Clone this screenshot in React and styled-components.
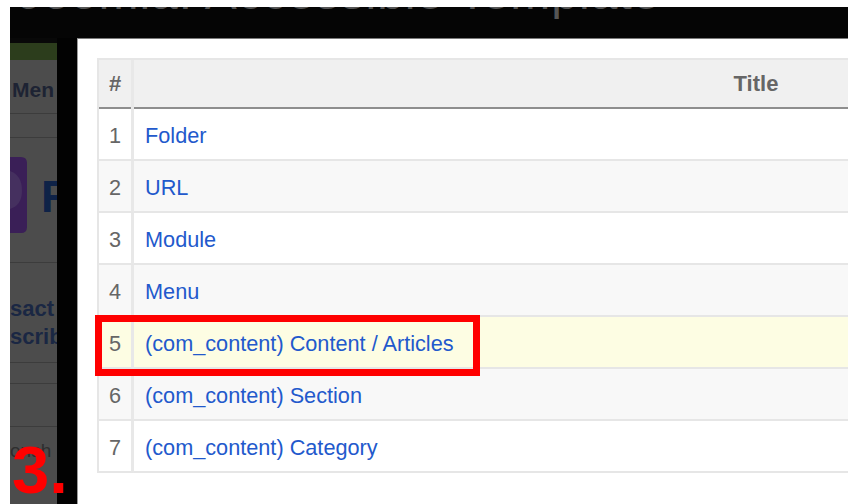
import React from "react";
import styled, { createGlobalStyle } from "styled-components";

const GlobalStyle = createGlobalStyle`
  html, body {
    margin: 0;
    padding: 0;
    background: #ffffff;
  }
  body {
    width: 848px;
    height: 504px;
    overflow: hidden;
    font-family: "Liberation Sans", Arial, sans-serif;
  }
`;

const Page = styled.div`
  position: relative;
  width: 848px;
  height: 504px;
  box-sizing: border-box;
  padding: 7px 0 0 10px;
  background: #ffffff;
  overflow: hidden;
`;

const Screen = styled.div`
  display: flex;
  flex-direction: column;
  height: 100%;
  background: #050505;
`;

/* header strip of the page behind the overlay; only the feet of its title show */
const TopBand = styled.div`
  position: relative;
  flex: none;
  height: 31px;
  overflow: hidden;
  clip-path: inset(0);
  padding-left: 8px;
`;

const BandTitle = styled.div`
  transform: translateY(-38px);
  font-size: 48px;
  line-height: 48px;
  color: #555555;
  white-space: nowrap;
  letter-spacing: 1px;
`;

const Body = styled.div`
  flex: 1;
  display: flex;
  min-height: 0;
`;

/* dimmed page sidebar behind the overlay */
const SidePanel = styled.div`
  flex: none;
  width: 47px;
  display: flex;
  flex-direction: column;
  background: #4c4c4c;
  overflow: hidden;
`;

const PanelCap = styled.div`
  flex: none;
  height: 5px;
  background: #080808;
`;

const GreenBar = styled.div`
  flex: none;
  height: 17px;
  background: #2c3d1c;
`;

const PanelRow = styled.div`
  flex: none;
  box-sizing: border-box;
  height: ${(p) => p.$h}px;
  padding: ${(p) => p.$pad || "0"};
  border-bottom: ${(p) => (p.$open ? "none" : "1px solid #3c3c3c")};
  white-space: nowrap;
  display: ${(p) => (p.$flex ? "flex" : "block")};
  align-items: flex-start;
`;

const PanelHeading = styled.div`
  font-size: 21px;
  line-height: 20px;
  font-weight: bold;
  color: #1d2333;
`;

const PanelText = styled.div`
  font-size: 22px;
  line-height: 28px;
  font-weight: bold;
  color: #1a2743;
`;

const PanelNote = styled.div`
  font-size: 19px;
  line-height: 20px;
  color: #2e2e2e;
`;

const LogoLetter = styled.div`
  margin: 36px 0 0 14px;
  font-size: 45px;
  line-height: 45px;
  font-weight: bold;
  color: #0e2247;
`;

const Gutter = styled.div`
  flex: none;
  width: 20px;
  background: #020202;
`;

const Modal = styled.div`
  flex: 1;
  position: relative;
  background: #ffffff;
  border-top: 1px solid #7a7a7a;
  border-left: 1px solid #9a9a9a;
  padding: 19px 0 0 19px;
  overflow: hidden;
`;

const Table = styled.table`
  width: 1281px;
  border-collapse: separate;
  border-spacing: 0;
  border: 2px solid #e6e6e6;
  border-right: none;
  border-bottom: none;
  font-family: "Liberation Sans", Arial, sans-serif;
`;

const HeadCell = styled.th`
  height: 47px;
  padding: 0 0 2px;
  background: #f0f0f0;
  color: #666666;
  font-size: 22px;
  font-weight: bold;
  text-align: center;
  box-shadow: inset 0 -2px 0 #8e8e8e;
  ${(p) => p.$narrow && "width: 32px; border-right: 3px solid #e8e8e8;"}
`;

const rowTones = {
  plain: "#ffffff",
  alt: "#f8f8f8",
  hover: "#fdfde3",
};

const Row = styled.tr`
  background: ${(p) => rowTones[p.$tone]};
`;

const NumCell = styled.td`
  height: 46px;
  padding: 4px 0 0;
  text-align: center;
  font-size: 21.7px;
  color: #666666;
  border-bottom: 2px solid #e6e6e6;
  border-right: 3px solid #e8e8e8;
`;

const TitleCell = styled.td`
  height: 46px;
  padding: 4px 0 0 11px;
  font-size: 21.7px;
  border-bottom: 2px solid #e6e6e6;
`;

const TitleLink = styled.a`
  color: #2259cc;
  text-decoration: none;
`;

/* red annotation frame drawn over the table */
const Highlight = styled.div`
  position: absolute;
  left: 17px;
  top: 276px;
  width: 385px;
  height: 61px;
  box-sizing: border-box;
  border: 7px solid #ff0000;
  pointer-events: none;
`;

const StepMark = styled.div`
  position: absolute;
  left: 12px;
  top: 436px;
  font-size: 67px;
  line-height: 67px;
  font-weight: bold;
  color: #ff0000;
`;

const items = [
  "Folder",
  "URL",
  "Module",
  "Menu",
  "(com_content) Content / Articles",
  "(com_content) Section",
  "(com_content) Category",
];

function Logo() {
  return (
    <svg width="17" height="76" viewBox="0 0 17 76" style={{ marginTop: 19, flex: "none" }}>
      <path d="M0 0 H11 Q17 0 17 6 V70 Q17 76 11 76 H0 Z" fill="#3a1f57" />
      <path d="M0 14 Q12 18 12 34 Q12 48 0 52 Z" fill="#45305f" />
    </svg>
  );
}

export default function App() {
  return (
    <>
      <GlobalStyle />
      <Page>
        <Screen>
          <TopBand>
            <BandTitle>Joomla!  Accessible Template</BandTitle>
          </TopBand>
          <Body>
            <SidePanel>
              <PanelCap />
              <GreenBar />
              <PanelRow $h={54} $pad="20px 0 0 2px">
                <PanelHeading>Men</PanelHeading>
              </PanelRow>
              <PanelRow $h={24} />
              <PanelRow $h={125} $flex>
                <Logo />
                <LogoLetter>R</LogoLetter>
              </PanelRow>
              <PanelRow $h={100} $pad="32px 0 0 0">
                <PanelText>sact</PanelText>
                <PanelText>scrib</PanelText>
              </PanelRow>
              <PanelRow $h={21} />
              <PanelRow $h={43} />
              <PanelRow $h={60} $pad="14px 0 0 0" $open>
                <PanelNote>onsh</PanelNote>
              </PanelRow>
            </SidePanel>
            <Gutter />
            <Modal>
              <Table>
                <thead>
                  <tr>
                    <HeadCell $narrow>#</HeadCell>
                    <HeadCell>Title</HeadCell>
                  </tr>
                </thead>
                <tbody>
                  {items.map((title, i) => (
                    <Row key={title} $tone={i === 4 ? "hover" : i % 2 ? "alt" : "plain"}>
                      <NumCell>{i + 1}</NumCell>
                      <TitleCell>
                        <TitleLink href="#">{title}</TitleLink>
                      </TitleCell>
                    </Row>
                  ))}
                </tbody>
              </Table>
              <Highlight />
            </Modal>
          </Body>
        </Screen>
        <StepMark>3.</StepMark>
      </Page>
    </>
  );
}
